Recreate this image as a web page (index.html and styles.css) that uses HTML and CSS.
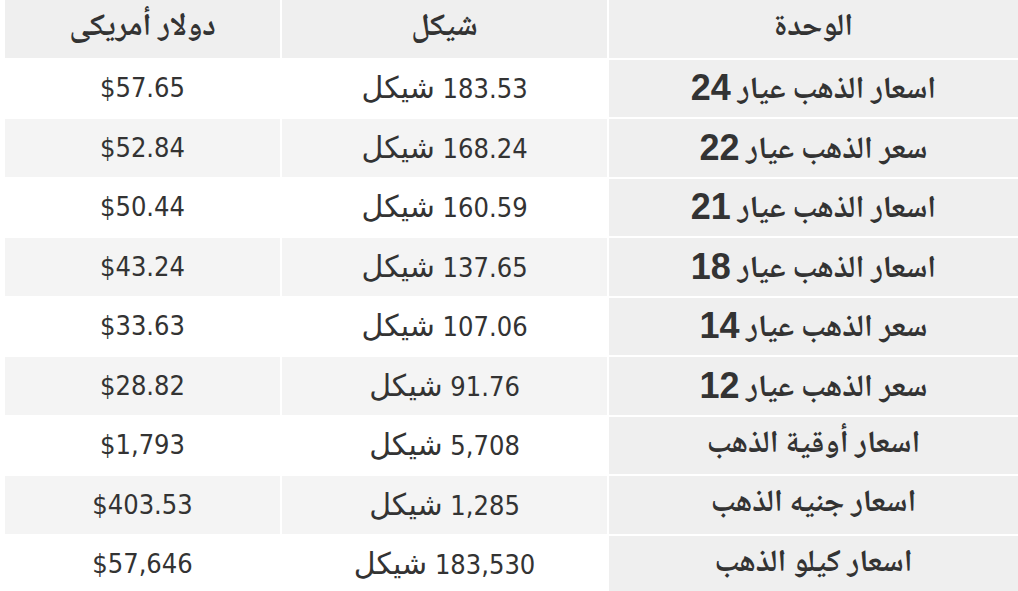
FILE: index.html
```html
<!DOCTYPE html>
<html lang="ar" dir="rtl">
<head>
<meta charset="utf-8">
<title>أسعار الذهب</title>
<link rel="stylesheet" href="styles.css">
</head>
<body>
<table class="prices">
  <thead>
    <tr>
      <th class="c-unit">الوحدة</th>
      <th class="c-ils">شيكل</th>
      <th class="c-usd">دولار أمريكى</th>
    </tr>
  </thead>
  <tbody>
    <tr><td class="unit">اسعار الذهب عيار <span class="num">24</span></td><td>183.53 <span class="cur">شيكل</span></td><td>$57.65</td></tr>
    <tr><td class="unit">سعر الذهب عيار <span class="num">22</span></td><td>168.24 <span class="cur">شيكل</span></td><td>$52.84</td></tr>
    <tr><td class="unit">اسعار الذهب عيار <span class="num">21</span></td><td>160.59 <span class="cur">شيكل</span></td><td>$50.44</td></tr>
    <tr><td class="unit">اسعار الذهب عيار <span class="num">18</span></td><td>137.65 <span class="cur">شيكل</span></td><td>$43.24</td></tr>
    <tr><td class="unit">سعر الذهب عيار <span class="num">14</span></td><td>107.06 <span class="cur">شيكل</span></td><td>$33.63</td></tr>
    <tr><td class="unit">سعر الذهب عيار <span class="num">12</span></td><td>91.76 <span class="cur">شيكل</span></td><td>$28.82</td></tr>
    <tr><td class="unit">اسعار أوقية الذهب</td><td>5,708 <span class="cur">شيكل</span></td><td>$1,793</td></tr>
    <tr><td class="unit">اسعار جنيه الذهب</td><td>1,285 <span class="cur">شيكل</span></td><td>$403.53</td></tr>
    <tr><td class="unit">اسعار كيلو الذهب</td><td>183,530 <span class="cur">شيكل</span></td><td>$57,646</td></tr>
  </tbody>
</table>
</body>
</html>
```

FILE: styles.css
```css
html, body {
  margin: 0;
  padding: 0;
  background: #fff;
  overflow: hidden;
}

.prices {
  direction: rtl;
  border-collapse: separate;
  border-spacing: 2px;
  width: 1017px;
  margin: -2px -2px 0 3px;
  table-layout: fixed;
  color: #333;
  font-family: "DejaVu Sans Condensed", "DejaVu Sans", sans-serif;
  font-size: 27px;
  line-height: 1.2;
}

.prices tr {
  height: 57.5px;
}

.prices th,
.prices td {
  box-sizing: border-box;
  padding: 0;
  text-align: center;
  vertical-align: middle;
  white-space: nowrap;
}

.prices th {
  background: #efefef;
  font-family: "Noto Naskh Arabic", "DejaVu Sans", sans-serif;
  font-weight: bold;
  font-size: 31px;
}

.c-unit { width: 409px; }
.c-ils { width: 325px; }
.c-usd { width: 275px; }

.prices td {
  background: #fff;
}

.prices tbody tr:nth-child(even) td {
  background: #f4f4f4;
}

.prices td.unit,
.prices tbody tr:nth-child(even) td.unit {
  background: #efefef;
  font-family: "Noto Naskh Arabic", "DejaVu Sans", sans-serif;
  font-weight: bold;
  font-size: 31px;
}

.num {
  font-family: "Liberation Sans", sans-serif;
  font-size: 36px;
  vertical-align: -2px;
}

.cur {
  font-family: "DejaVu Sans", sans-serif;
  font-size: 30px;
}
```
